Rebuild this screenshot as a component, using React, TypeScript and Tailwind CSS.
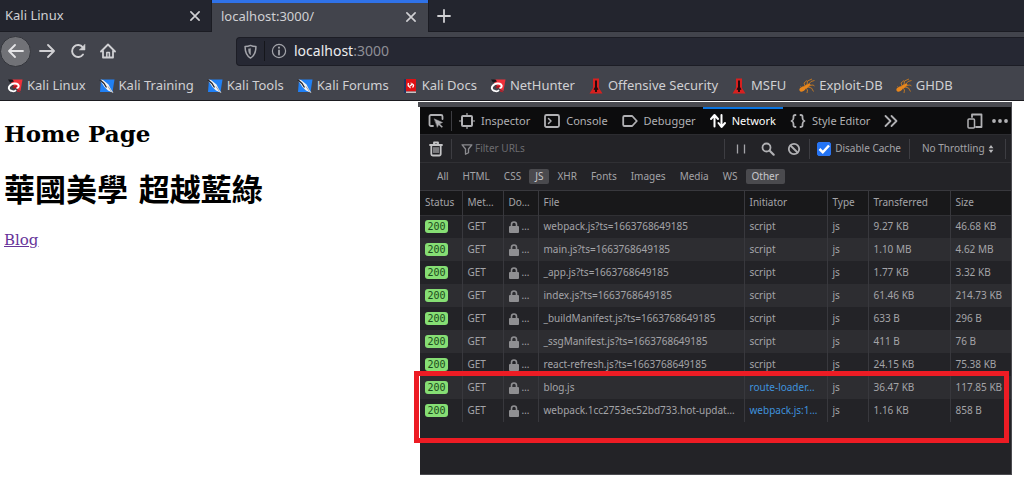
import { ReactNode, useState } from "react";

const scripts = [
    { file: "webpack.js?ts=1663768649185", initiator: "script", transferred: "9.27 KB", size: "46.68 KB" },
    { file: "main.js?ts=1663768649185", initiator: "script", transferred: "1.10 MB", size: "4.62 MB" },
    { file: "_app.js?ts=1663768649185", initiator: "script", transferred: "1.77 KB", size: "3.32 KB" },
    { file: "index.js?ts=1663768649185", initiator: "script", transferred: "61.46 KB", size: "214.73 KB" },
    { file: "_buildManifest.js?ts=1663768649185", initiator: "script", transferred: "633 B", size: "296 B" },
    { file: "_ssgManifest.js?ts=1663768649185", initiator: "script", transferred: "411 B", size: "76 B" },
    { file: "react-refresh.js?ts=1663768649185", initiator: "script", transferred: "24.15 KB", size: "75.38 KB" },
    { file: "blog.js", initiator: "route-loader…", link: true, transferred: "36.47 KB", size: "117.85 KB" },
    { file: "webpack.1cc2753ec52bd733.hot-updat…", initiator: "webpack.js:1…", link: true, transferred: "1.16 KB", size: "858 B" },
];

const columns = ["Status", "Met…", "Do…", "File", "Initiator", "Type", "Transferred", "Size"];
const filters = ["All", "HTML", "CSS", "JS", "XHR", "Fonts", "Images", "Media", "WS", "Other"];

interface IconProps {
    children: ReactNode;
    className?: string;
}

// 16px outline icon, takes its colour from the text
function Icon({ children, className = "size-4" }: IconProps) {
    return (
        <svg viewBox="0 0 16 16" className={`shrink-0 ${className}`} fill="none" stroke="currentColor" strokeWidth="1.8" strokeLinecap="round" strokeLinejoin="round" aria-hidden="true">
            {children}
        </svg>
    );
}

function DragonIcon() {
    return (
        <svg viewBox="0 0 16 16" className="size-4 shrink-0" aria-hidden="true">
            <path d="M4.500 1.500h11L13.500 13l-2-1-7-7z" fill="#f0303a" />
            <path d="M1 1.500h4.500L7 3.500l-4 1z" fill="#15161b" />
            <path d="M10 11l4 3.500-4-1z" fill="#c21d28" />
            <path d="M5.500 8.500l4-1 1 2-4 1z" fill="#b3161f" />
            <path d="M4.500 13C1.500 12 1 9.500 3 7.500s6-3 8-1c1.500 1.600.5 3.500-1.500 3.500" fill="none" stroke="#fff" strokeWidth="2" />
            <path d="M4 12.500c2 1.200 4 1 5-.5" fill="none" stroke="#fff" strokeWidth="1.600" />
        </svg>
    );
}

function PenIcon() {
    return (
        <svg viewBox="0 0 16 16" className="size-4 shrink-0" aria-hidden="true">
            <path d="M2 1.500h13.500L13.500 14H1z" fill="#2080f4" />
            <path d="M.5 1.500L4 2l5.500 4.500 2 4 3 4.500-5.500-2.500L5.500 9z" fill="#f3f3f3" />
            <path d="M.5 1.500l4.500 4 2.500 4" fill="none" stroke="#23252e" strokeWidth="1.300" />
            <path d="M9 8.500l3.500 5" stroke="#a4a7ad" />
        </svg>
    );
}

function DocsIcon() {
    return (
        <svg viewBox="0 0 16 16" className="size-4 shrink-0" aria-hidden="true">
            <path d="M2 1h3v14H2z" fill="#22365f" />
            <path d="M4 1h10v12.500H4z" fill="#df1014" />
            <path d="M4 13.500h10V15H4z" fill="#c9c2c2" />
            <path d="M6.500 5c-1 2.500 0 4 1.500 3s2-2.500 3-1.500.5 2-.5 3" fill="none" stroke="#fff" strokeWidth="1.300" />
            <path d="M8.500 5l2 .5M7 9.500l2 .3" stroke="#f6c9c9" />
        </svg>
    );
}

function DaggerIcon() {
    return (
        <svg viewBox="0 0 16 16" className="size-4 shrink-0" aria-hidden="true">
            <path d="M5 .5h6V10l3.500 5.500h-13L5 10z" fill="#d8201f" />
            <path d="M7 2.500h2V9l1.500 2.500L9 12v2H7v-2l-1.500-.5L7 9z" fill="#240b0d" />
        </svg>
    );
}

function BugIcon() {
    return (
        <svg viewBox="0 0 16 16" className="size-4 shrink-0" aria-hidden="true">
            <g fill="#e8861c">
                <ellipse cx="3.500" cy="11" rx="3.300" ry="2.200" transform="rotate(-30 3.500 11)" />
                <ellipse cx="7.500" cy="8.500" rx="2.600" ry="1.800" transform="rotate(-30 7.500 8.500)" />
                <circle cx="10" cy="7" r="1.500" />
            </g>
            <path d="M6 8L5 5l3-2.500M8 7l.5-4L13 1M10 6l2-2.500 3.500-1M10 7.500l4-.5 1.500 1M9 9l3.500 1 2 3.500M7 10l1.500 2-.5 3M3 10L1.500 8.500" fill="none" stroke="#c97a20" strokeWidth=".9" />
        </svg>
    );
}

const bookmarks = [
    { name: "Kali Linux", icon: <DragonIcon /> },
    { name: "Kali Training", icon: <PenIcon /> },
    { name: "Kali Tools", icon: <PenIcon /> },
    { name: "Kali Forums", icon: <PenIcon /> },
    { name: "Kali Docs", icon: <DocsIcon /> },
    { name: "NetHunter", icon: <DragonIcon /> },
    { name: "Offensive Security", icon: <DaggerIcon /> },
    { name: "MSFU", icon: <DaggerIcon /> },
    { name: "Exploit-DB", icon: <BugIcon /> },
    { name: "GHDB", icon: <BugIcon /> },
];

function CloseIcon() {
    return (
        <Icon className="size-3">
            <path d="M2.500 2.500l11 11M13.500 2.500l-11 11" strokeWidth="2.200" />
        </Icon>
    );
}

function BrowserChrome() {
    return (
        <header className="border-b border-[#1b1b20] bg-[#42444c] text-[#d0d0d3]">
            <div className="flex h-8 bg-[#23252e] text-[13px]">
                <div className="flex w-[212px] items-center justify-between border-r border-b border-[#1b1c23] pr-[10px] pl-[5px]">
                    <span>Kali Linux</span>
                    <button aria-label="Close Kali Linux"><CloseIcon /></button>
                </div>
                <div className="flex w-[216px] items-center justify-between border-t-3 border-[#2f72e8] bg-[#42444c] pr-[11px] pb-0.5 pl-[9px]">
                    <span>localhost:3000/</span>
                    <button aria-label="Close localhost"><CloseIcon /></button>
                </div>
                <div className="flex flex-1 items-center border-b border-l border-[#1b1c23] pl-[7px]">
                    <button aria-label="New tab">
                        <Icon><path d="M8 2v12M2 8h12" /></Icon>
                    </button>
                </div>
            </div>

            <nav className="flex h-[38px] items-center">
                <button aria-label="Back" className="flex size-[31px] items-center justify-center rounded-full border border-[#34363c] bg-[#717277] text-[#e4e4e6]">
                    <Icon><path d="M15 8H1.500M7 2L1 8l6 6" strokeWidth="1.800" /></Icon>
                </button>
                <button aria-label="Forward" className="ml-2">
                    <Icon><path d="M1 8h13.500M9 2l6 6-6 6" strokeWidth="1.800" /></Icon>
                </button>
                <button aria-label="Reload" className="ml-[15px]">
                    <Icon>
                        <path d="M13 11.500A6 6 0 1 1 12.800 4.300" strokeWidth="1.900" />
                        <path d="M15 1.500V7H9.500z" fill="currentColor" strokeWidth=".5" />
                    </Icon>
                </button>
                <button aria-label="Home" className="ml-[14px]">
                    <Icon>
                        <path d="M1 8.500L8 1.500l7 7M3 8v6.500h10V8" strokeWidth="1.800" />
                        <path d="M6.800 14V9.500h2.600V14" strokeWidth="1.500" />
                    </Icon>
                </button>
                <div className="ml-[120px] flex h-[29px] flex-1 items-center rounded-l border border-r-0 border-[#1c1d25] bg-[#262833] pl-1.5 text-[#a3a4aa]">
                    <Icon className="size-[15px]">
                        <path d="M8 1.500c2 1 3.800 1.200 5.800 1.200C13.800 9 12.500 12.500 8 15 3.500 12.500 2.200 9 2.200 2.700 4.200 2.700 6 2.500 8 1.500z" strokeWidth="1.600" />
                        <path d="M8 5v6.500C6.500 10.500 6 8.500 5.800 5.500z" fill="currentColor" strokeWidth=".5" />
                    </Icon>
                    <span className="mr-1.5 ml-1.5 h-5 w-px bg-[#15161b]" />
                    <Icon>
                        <circle cx="8" cy="8" r="6.600" strokeWidth="1.200" />
                        <path d="M8 7.500v4" />
                        <path d="M8 4.600v.1" strokeWidth="2" />
                    </Icon>
                    <a href="#" className="ml-[7px] text-sm text-[#ececef]">
                        localhost<span className="text-[#8d8e95]">:3000</span>
                    </a>
                </div>
            </nav>

            <div className="flex h-[30px] items-center gap-[13px] overflow-hidden pt-px pl-[7px] text-[13px]">
                {bookmarks.map((b) => (
                    <a key={b.name} href="#" className="flex shrink-0 items-center gap-1">
                        {b.icon}
                        {b.name}
                    </a>
                ))}
            </div>
        </header>
    );
}

function ToolTab({ label, active, children }: { label: string; active?: boolean; children: ReactNode }) {
    return (
        <button className={`flex h-full items-center gap-1.5 border-t-2 px-[7px] pb-px ${active ? "border-[#0a74e0] text-white" : "border-transparent"}`}>
            <Icon>{children}</Icon>
            {label}
        </button>
    );
}

function Separator() {
    return <span className="h-5 w-px shrink-0 bg-[#3d3d42]" />;
}

function DevTools() {
    const [active, setActive] = useState(["JS", "Other"]);
    const [noCache, setNoCache] = useState(true);

    const toggle = (name: string) => {
        setActive(active.includes(name) ? active.filter((a) => a !== name) : [...active, name]);
    };

    return (
        <section className="relative mt-px mr-3 min-w-0 flex-1 text-[10px] text-[#a4a4a8]">
            <div className="h-[5px] bg-[#494a50]" />
            <div className="ml-0.5 border-r border-b border-[#4a4a4f] bg-[#232327] pb-[52px]">
                <div className="flex h-7 items-center border-b border-[#2c2c30] bg-[#0c0c0d] text-[11px] text-[#b1b1b4]">
                    <button aria-label="Pick an element" className="mr-[7px] ml-2">
                        <Icon>
                            <path d="M5 13H3a1.500 1.500 0 0 1-1.500-1.500v-8A1.500 1.500 0 0 1 3 2h10a1.500 1.500 0 0 1 1.500 1.500V6" />
                            <path d="M6.500 6l8 3.500-3 1.300 3 3-.8.700-3-3L9.500 14z" fill="currentColor" strokeWidth=".5" />
                        </Icon>
                    </button>
                    <Separator />
                    <ToolTab label="Inspector">
                        <rect x="3" y="3" width="10" height="10" rx="1" strokeWidth="2" />
                        <path d="M8 .5V3M8 13v2.500M.5 8H3M13 8h2.500" strokeWidth="1.200" />
                    </ToolTab>
                    <ToolTab label="Console">
                        <rect x="1" y="2" width="14" height="12" rx="1.500" />
                        <path d="M4.500 5.500L7 8l-2.500 2.500" strokeWidth="1.500" />
                    </ToolTab>
                    <ToolTab label="Debugger">
                        <path d="M2.500 3h7.700L14.800 8l-4.600 5H2.500a1.300 1.300 0 0 1-1.300-1.300V4.300A1.300 1.300 0 0 1 2.500 3z" />
                    </ToolTab>
                    <ToolTab label="Network" active>
                        <path d="M4.500 13.500V2.500M1 6l3.500-4L8 6M11.500 2v11.500M8.500 10l3 4 3.500-4" strokeWidth="2" />
                    </ToolTab>
                    <ToolTab label="Style Editor">
                        <path d="M5.500 2C3 2 3.500 3.500 3.500 5S3 7.500 1.500 8C3 8.500 3.500 9.500 3.500 11s-.5 3 2 3M10.500 2c2.500 0 2 1.500 2 3s.5 2.500 2 3c-1.500.5-2 1.500-2 3s.5 3-2 3" />
                    </ToolTab>
                    <button aria-label="More panels" className="ml-1.5">
                        <Icon><path d="M2.500 3l5 5-5 5M8.500 3l5 5-5 5" /></Icon>
                    </button>
                    <button aria-label="Responsive design mode" className="ml-auto">
                        <Icon>
                            <path d="M5 4V1.500h9.500v12.500H9" />
                            <rect x="1" y="6" width="6.500" height="9" rx="1" strokeWidth="1.500" />
                        </Icon>
                    </button>
                    <button aria-label="Options" className="mr-[3px] ml-[9px]">
                        <Icon>
                            <g fill="currentColor" stroke="none">
                                <circle cx="2" cy="8" r="1.900" />
                                <circle cx="8" cy="8" r="1.900" />
                                <circle cx="14" cy="8" r="1.900" />
                            </g>
                        </Icon>
                    </button>
                </div>

                <div className="flex h-7 items-center border-b border-[#303034]">
                    <button aria-label="Clear" className="mr-[7px] ml-2 text-[#c4c4c6]">
                        <Icon>
                            <path d="M2 4h12M6 3.500V1.500h4v2M3.300 4.500V13a1.500 1.500 0 0 0 1.500 1.500h6.400A1.500 1.500 0 0 0 12.700 13V4.500" />
                            <path d="M6 6.500v5M8 6.500v5M10 6.500v5" strokeWidth="1.100" />
                        </Icon>
                    </button>
                    <Separator />
                    <label htmlFor="filter" className="ml-[9px] text-[#8a8a8e]">
                        <Icon className="size-3">
                            <path d="M1.500 2.500h13L10 8v5l-4 2V8z" />
                        </Icon>
                    </label>
                    <input id="filter" aria-label="Filter URLs" placeholder="Filter URLs" className="ml-0.5 min-w-0 flex-1 bg-transparent outline-none placeholder:text-[#6c6c70]" />
                    <Separator />
                    <button aria-label="Pause" className="ml-2 text-[#a4a4a8]">
                        <Icon><path d="M4.500 3.500v9M11.500 3.500v9" strokeWidth="1.300" strokeLinecap="butt" /></Icon>
                    </button>
                    <button aria-label="Search" className="ml-[11px] text-[#b0b0b3]">
                        <Icon>
                            <circle cx="6.500" cy="6.500" r="4" />
                            <path d="M9.700 9.700l4 4" strokeWidth="2.200" />
                        </Icon>
                    </button>
                    <button aria-label="Block" className="mr-[7px] ml-[10px] text-[#b0b0b3]">
                        <Icon>
                            <circle cx="8" cy="8" r="5.200" />
                            <path d="M4.500 4.500l7 7" />
                        </Icon>
                    </button>
                    <Separator />
                    <label className="mr-2 ml-[7px] flex items-center gap-1">
                        <span className="relative flex size-[14px]">
                            <input type="checkbox" checked={noCache} onChange={() => setNoCache(!noCache)} className="peer size-[14px] appearance-none rounded-xs border border-[#2b74f0] checked:bg-[#2374f5]" />
                            <svg viewBox="0 0 14 14" className="pointer-events-none absolute inset-0 hidden peer-checked:block" fill="none" stroke="#fff" strokeWidth="2.500">
                                <path d="M2.500 7l3.300 3.300L12 3.500" />
                            </svg>
                        </span>
                        Disable Cache
                    </label>
                    <Separator />
                    <div className="relative mr-[11px] ml-3">
                        <select aria-label="Throttling" className="block appearance-none bg-[#232327] pr-[9px]">
                            <option>No Throttling</option>
                        </select>
                        <svg viewBox="0 0 6 10" className="pointer-events-none absolute top-1 right-0 h-2 w-[6px]" fill="#b8b8bb" aria-hidden="true">
                            <path d="M0 4l3-4 3 4zM0 6l3 4 3-4z" />
                        </svg>
                    </div>
                    <Separator />
                    <span className="w-[5px]" />
                </div>

                <div className="flex h-7 items-center gap-0.5 border-b border-[#38383d] pl-[11px]">
                    {filters.map((name) => (
                        <button
                            key={name}
                            onClick={() => toggle(name)}
                            className={`h-[15px] rounded-xs px-1.5 leading-[15px] ${active.includes(name) ? "bg-[#4a4a4e] text-[#c8c8cb]" : ""}`}
                        >
                            {name}
                        </button>
                    ))}
                </div>

                <table className="w-full table-fixed border-collapse text-left">
                    <colgroup>
                        <col className="w-[42px]" />
                        <col className="w-[41px]" />
                        <col className="w-[35px]" />
                        <col />
                        <col className="w-[83px]" />
                        <col className="w-[41px]" />
                        <col className="w-[82px]" />
                        <col className="w-[61px]" />
                    </colgroup>
                    <thead>
                        <tr className="h-6 border-b border-[#303034] bg-[#18181a]">
                            {columns.map((name) => (
                                <th key={name} className="border-r border-[#38383d] p-0 pl-[5px] font-normal last:border-r-0">{name}</th>
                            ))}
                        </tr>
                    </thead>
                    <tbody>
                        {scripts.map((s) => (
                            <tr key={s.file} className="h-[23px] even:bg-[#2d2d31] [&>td]:overflow-hidden [&>td]:border-r [&>td]:border-[#38383d] [&>td]:p-0 [&>td]:pl-[5px] [&>td]:whitespace-nowrap [&>td:last-child]:border-r-0">
                                <td>
                                    <span className="block h-[13px] w-[23px] rounded-[3px] bg-[#86de74] text-center font-['DejaVu_Sans_Mono',monospace] leading-[13px] text-[#1c4a1c]">200</span>
                                </td>
                                <td>GET</td>
                                <td>
                                    <span className="flex items-center gap-[3px]">
                                        <svg viewBox="0 0 10 12" className="h-3 w-[10px] shrink-0" aria-hidden="true">
                                            <path d="M2.500 6V3.500a2.500 2.500 0 0 1 5 0V6" fill="none" stroke="#8f8f92" strokeWidth="1.600" />
                                            <rect y="5" width="10" height="7" rx="1" fill="#8f8f92" />
                                        </svg>
                                        …
                                    </span>
                                </td>
                                <td>{s.file}</td>
                                <td>{s.link ? <a href="#" className="text-[#3f92dc]">{s.initiator}</a> : s.initiator}</td>
                                <td>js</td>
                                <td>{s.transferred}</td>
                                <td>{s.size}</td>
                            </tr>
                        ))}
                    </tbody>
                </table>
            </div>
            {/* highlight around the two scripts fetched for the blog page */}
            <div className="pointer-events-none absolute right-[3px] bottom-8 -left-1 h-[72px] border-5 border-[#ed1c24]" />
        </section>
    );
}

export default function App() {
    return (
        <div className="min-h-screen bg-white font-['Noto_Sans',sans-serif]">
            <BrowserChrome />
            <div className="flex">
                <main className="w-[418px] shrink-0 pl-1 font-['DejaVu_Serif','Noto_Sans_CJK_TC',serif] text-black">
                    <h2 className="mt-5 text-[23px] leading-[26px] font-bold">Home Page</h2>
                    <h1 className="mt-5 text-[31px] leading-[46px] font-bold">華國美學 超越藍綠</h1>
                    <a href="#" className="mt-4 inline-block text-[15px] leading-[22px] text-[#663399] underline">Blog</a>
                </main>
                <DevTools />
            </div>
        </div>
    );
}
